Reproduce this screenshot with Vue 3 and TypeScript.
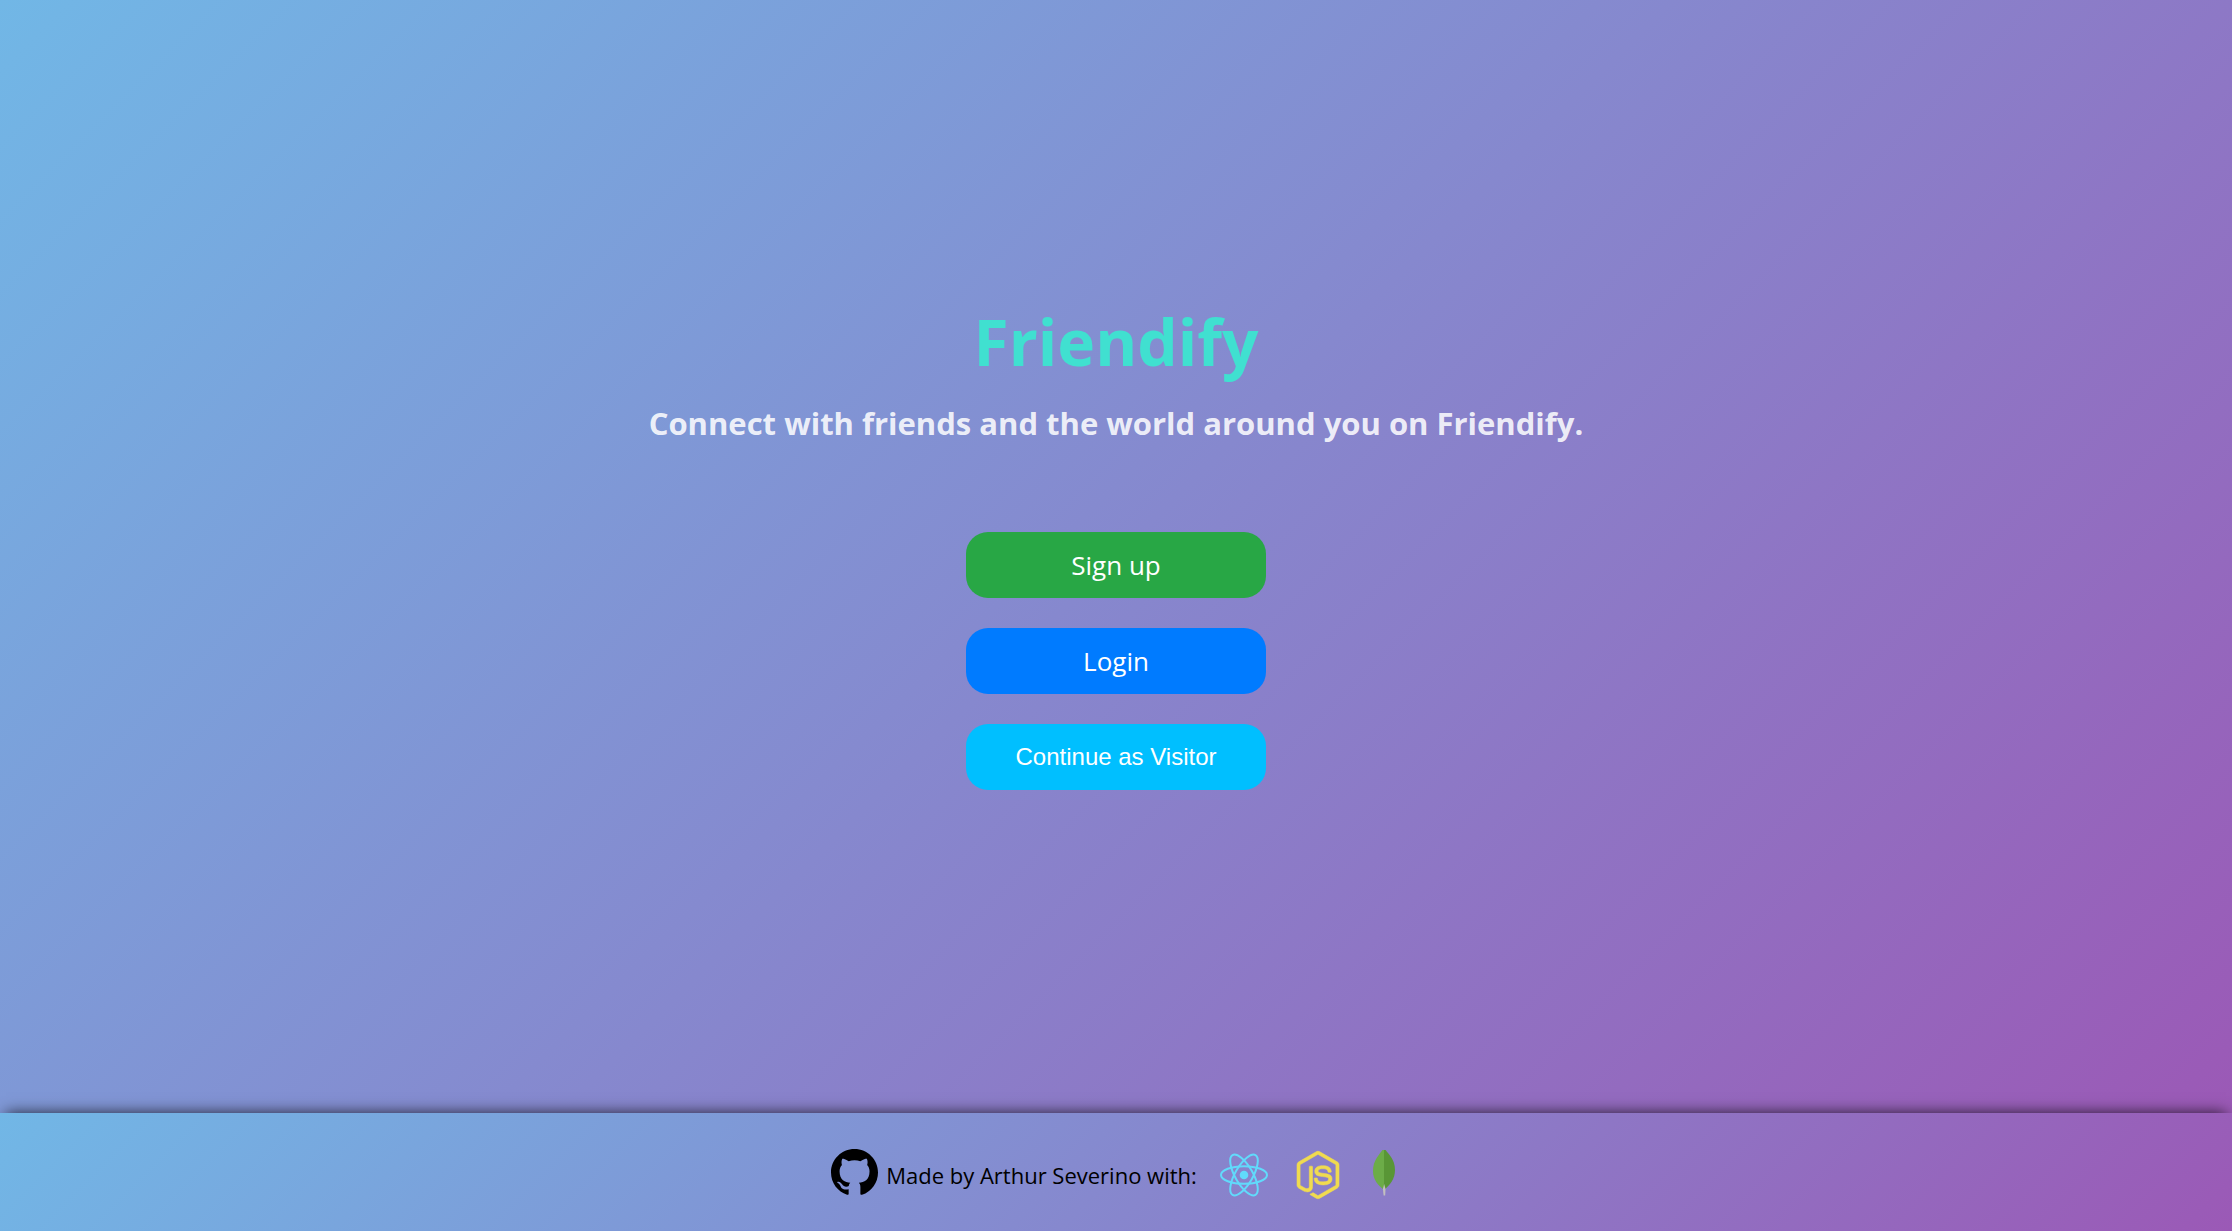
<script setup lang="ts">
interface Action {
  label: string
  kind: string
}

const actions: Action[] = [
  { label: 'Sign up', kind: 'signup' },
  { label: 'Login', kind: 'login' },
]

const orbits: number[] = [0, 60, 120]
</script>

<template>
  <div class="page">
    <main class="hero">
      <h1 class="title">Friendify</h1>
      <h2 class="subtitle">Connect with friends and the world around you on Friendify.</h2>
      <nav class="actions">
        <a v-for="action in actions" :key="action.kind" href="#" class="action" :class="action.kind">{{ action.label }}</a>
        <button type="button" class="action visitor">Continue as Visitor</button>
      </nav>
    </main>

    <footer class="footer">
      <a href="#" class="credit">
        <svg class="github" viewBox="0 0 16 16" aria-hidden="true">
          <path d="M8 0C3.58 0 0 3.58 0 8c0 3.54 2.29 6.53 5.47 7.59.4.07.55-.17.55-.38 0-.19-.01-.82-.01-1.49-2.01.37-2.53-.49-2.69-.94-.09-.23-.48-.94-.82-1.13-.28-.15-.68-.52-.01-.53.63-.01 1.08.58 1.23.82.72 1.21 1.87.87 2.33.66.07-.52.28-.87.51-1.07-1.78-.2-3.64-.89-3.64-3.95 0-.87.31-1.59.82-2.15-.08-.2-.36-1.02.08-2.12 0 0 .67-.21 2.2.82.64-.18 1.32-.27 2-.27s1.36.09 2 .27c1.53-1.04 2.2-.82 2.2-.82.44 1.1.16 1.92.08 2.12.51.56.82 1.27.82 2.15 0 3.07-1.87 3.75-3.65 3.95.29.25.54.73.54 1.48 0 1.07-.01 1.93-.01 2.2 0 .21.15.46.55.38A8.01 8.01 0 0 0 16 8c0-4.42-3.58-8-8-8z" />
        </svg>
        <span class="credit-text">Made by Arthur Severino with:</span>
      </a>
      <div class="stack">
        <svg class="tech" viewBox="-25 -25 50 50" role="img" aria-label="React">
          <circle r="4.3" fill="#61dafb" />
          <ellipse v-for="angle in orbits" :key="angle" rx="23" ry="8.8" fill="none" stroke="#61dafb" stroke-width="2" :transform="`rotate(${angle})`" />
        </svg>
        <svg class="tech" viewBox="-32 -10 512 532" role="img" aria-label="Node.js">
          <path fill="#f0db4f" stroke="#f0db4f" stroke-width="6" d="M224 508c-6.700 0-13.500-1.800-19.400-5.200l-61.700-36.500c-9.200-5.200-4.700-7-1.700-8 12.300-4.300 14.800-5.200 27.900-12.700 1.400-.8 3.200-.5 4.600.4l47.400 28.100c1.700 1 4.100 1 5.700 0l184.700-106.600c1.700-1 2.800-3 2.800-5V149.300c0-2.100-1.100-4-2.900-5.100L226.800 37.700c-1.700-1-4-1-5.700 0L36.600 144.300c-1.800 1-2.900 3-2.900 5.100v213.100c0 2 1.100 4 2.900 4.900l50.600 29.200c27.500 13.700 44.300-2.400 44.300-18.700V167.500c0-3 2.400-5.300 5.400-5.300h23.400c2.900 0 5.400 2.300 5.400 5.300V378c0 36.600-20 57.600-54.700 57.600-10.700 0-19.100 0-42.500-11.600l-48.400-27.900C8.100 389.200.7 376.300.7 362.400V149.300c0-13.800 7.400-26.800 19.400-33.700L204.600 9c11.700-6.600 27.200-6.600 38.800 0l184.700 106.700c12 6.900 19.400 19.800 19.400 33.700v213.100c0 13.800-7.400 26.700-19.400 33.700L243.400 502.800c-5.900 3.400-12.600 5.200-19.400 5.200zm149.100-210.100c0-39.900-27-50.500-83.700-58-57.400-7.600-63.200-11.500-63.200-24.900 0-11.100 4.900-25.900 47.400-25.900 37.900 0 51.900 8.200 57.700 33.800.5 2.400 2.700 4.200 5.200 4.200h24c1.500 0 2.900-.6 3.900-1.700s1.500-2.600 1.400-4.100c-3.700-44.100-33-64.600-92.200-64.600-52.700 0-84.100 22.200-84.100 59.500 0 40.400 31.300 51.600 81.800 56.600 60.500 5.900 65.200 14.800 65.200 26.700 0 20.600-16.600 29.400-55.500 29.400-48.900 0-59.600-12.300-63.200-36.600-.4-2.600-2.600-4.500-5.300-4.500h-23.900c-3 0-5.300 2.400-5.300 5.300 0 31.100 16.900 68.200 97.800 68.200 58.400-.1 92-23.200 92-63.400z" />
        </svg>
        <svg class="tech leaf" viewBox="8 4 34 50" role="img" aria-label="MongoDB">
          <path fill="#6cac48" d="M25 1C23 7 14 12 14 25c0 9 5 14 10.500 18.500l.8-1z" />
          <path fill="#599636" d="M25 1c2 6 11 10 11 23 0 9-5 15-10.500 19.500L25 42z" />
          <path fill="#c2bfbf" d="M25.200 38l1.300 5-.3 6.500h-1.600l-.7-6.500z" />
        </svg>
      </div>
    </footer>
  </div>
</template>

<style>
body {
  margin: 0;
}
</style>

<style scoped>
.page {
  display: flex;
  flex-direction: column;
  min-height: 100vh;
  font-family: "Segoe UI", "Open Sans", "Noto Sans", sans-serif;
}

.hero {
  flex: 1;
  display: flex;
  flex-direction: column;
  align-items: center;
  justify-content: center;
  padding: 0 20px 20px;
  background: linear-gradient(135deg, #71b7e6, #9b59b6);
}

.title {
  margin: 0 0 18px;
  font-size: 64px;
  line-height: 78px;
  font-weight: 700;
  color: #40e0d0;
}

.subtitle {
  margin: 0 0 85px;
  font-size: 31px;
  line-height: 48px;
  font-weight: 700;
  text-align: center;
  color: rgba(255, 255, 255, 0.87);
}

.actions {
  display: flex;
  flex-direction: column;
  gap: 30px;
}

.action {
  display: flex;
  align-items: center;
  justify-content: center;
  box-sizing: border-box;
  width: 300px;
  height: 66px;
  border: 0;
  border-radius: 22px;
  color: #fff;
  font-size: 26px;
  line-height: 36px;
  text-decoration: none;
  cursor: pointer;
}

.signup {
  background: #28a745;
}

.login {
  background: #007bff;
}

.visitor {
  background: #00bfff;
  font-family: "Liberation Sans", Arial, sans-serif;
  font-size: 24px;
}

.footer {
  position: relative;
  display: flex;
  align-items: center;
  justify-content: center;
  gap: 22px;
  box-sizing: border-box;
  min-height: 118px;
  background: linear-gradient(135deg, #71b7e6, #9b59b6);
  box-shadow: 0 -6px 14px -6px rgba(0, 0, 0, 0.75);
}

.credit {
  display: flex;
  align-items: center;
  gap: 8px;
  color: #000;
  font-size: 22px;
  line-height: 32px;
  text-decoration: none;
}

.credit-text {
  padding-top: 6px;
}

.github {
  width: 47px;
  height: 47px;
}

.stack {
  display: flex;
  gap: 24px;
  padding-top: 6px;
}

.tech {
  width: 50px;
  height: 50px;
}

.leaf {
  width: 34px;
}
</style>
